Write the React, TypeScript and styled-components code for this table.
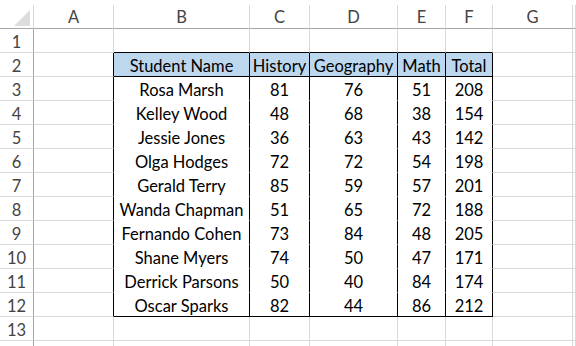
import { Fragment } from "react";
import styled, { createGlobalStyle } from "styled-components";

const GlobalStyle = createGlobalStyle`
  html, body {
    margin: 0;
    padding: 0;
    background: #fff;
    overflow: hidden;
  }
  body {
    font-family: Lato, "Liberation Sans", sans-serif;
  }
`

const GRID = "#d9d9d9";
const HEAD_LINE = "#a6a6a6";
const INK = "#000";

const Sheet = styled.div`
  width: 576px;
  height: 346px;
  overflow: hidden;
  display: grid;
  grid-template-columns: 34px 80px 136px 60px 88px 48px 47px 80px 1fr;
  grid-auto-rows: 24px;
  grid-template-rows: 29px;
  font-size: 16.5px;
  color: #000;
`

const Corner = styled.div`
  margin-top: 5px;
  border-right: 1px solid ${GRID};
  border-bottom: 1px solid ${HEAD_LINE};
  display: flex;
  justify-content: flex-end;
  align-items: flex-end;
  padding: 0 2px 2px 0;
  & svg { display: block; }
`

const ColHead = styled.div`
  margin-top: 5px;
  border-right: 1px solid ${GRID};
  border-bottom: 1px solid ${HEAD_LINE};
  display: flex;
  align-items: center;
  justify-content: center;
  color: #444;
  padding-top: 1px;
`

const RowHead = styled.div`
  border-right: 1px solid ${HEAD_LINE};
  border-bottom: 1px solid ${GRID};
  display: flex;
  align-items: center;
  justify-content: center;
  color: #444;
  padding-top: 3px;
`

const Cell = styled.div<{ $right: string; $bottom: string; $fill?: string }>`
  border-right: 1px solid ${p => p.$right};
  border-bottom: 1px solid ${p => p.$bottom};
  background: ${p => p.$fill || "#fff"};
  display: flex;
  align-items: center;
  justify-content: center;
  white-space: nowrap;
  overflow: hidden;
  padding-top: 3px;
`

const columns = ["A", "B", "C", "D", "E", "F", "G", ""];

const header = ["Student Name", "History", "Geography", "Math", "Total"];

const students: [string, number, number, number, number][] = [
  ["Rosa Marsh", 81, 76, 51, 208],
  ["Kelley Wood", 48, 68, 38, 154],
  ["Jessie Jones", 36, 63, 43, 142],
  ["Olga Hodges", 72, 72, 54, 198],
  ["Gerald Terry", 85, 59, 57, 201],
  ["Wanda Chapman", 51, 65, 72, 188],
  ["Fernando Cohen", 73, 84, 48, 205],
  ["Shane Myers", 74, 50, 47, 171],
  ["Derrick Parsons", 50, 40, 84, 174],
  ["Oscar Sparks", 82, 44, 86, 212],
];

// row 2 is the header, rows 3..12 the students
function cellText(row: number, col: number) {
  if (col < 1 || col > 5) return "";
  if (row === 2) return header[col - 1];
  if (row >= 3 && row <= 12) return String(students[row - 3][col - 1]);
  return "";
}

function App() {
  // 13 numbered rows, plus the top edge of row 14 peeking in at the bottom
  const rows = Array.from({ length: 14 }, (_, i) => i + 1);

  return (
    <>
      <GlobalStyle />
      <Sheet>
        <Corner>
          <svg width="17" height="16" viewBox="0 0 17 16">
            <polygon points="16,0 16,16 0,16" fill="#dcdcdc" />
          </svg>
        </Corner>
        {columns.map((c, i) => (
          <ColHead key={i}>{c}</ColHead>
        ))}

        {rows.map(row => (
          <Fragment key={row}>
            <RowHead>{row <= 13 ? row : ""}</RowHead>
            {columns.map((_, col) => {
              const inTable = row >= 2 && row <= 12 && col >= 1 && col <= 5;
              const leftOfTable = row >= 2 && row <= 12 && col === 0;
              const aboveTable = row === 1 && col >= 1 && col <= 5;

              let right = GRID;
              let bottom = GRID;
              if (inTable || leftOfTable) right = INK;
              if (aboveTable) bottom = INK;
              if (inTable) bottom = row === 2 || row === 12 ? INK : "#fff";

              return (
                <Cell
                  key={col}
                  $right={right}
                  $bottom={bottom}
                  $fill={inTable && row === 2 ? "#bdd7ee" : undefined}
                >
                  {cellText(row, col)}
                </Cell>
              );
            })}
          </Fragment>
        ))}
      </Sheet>
    </>
  );
}

export default App;
